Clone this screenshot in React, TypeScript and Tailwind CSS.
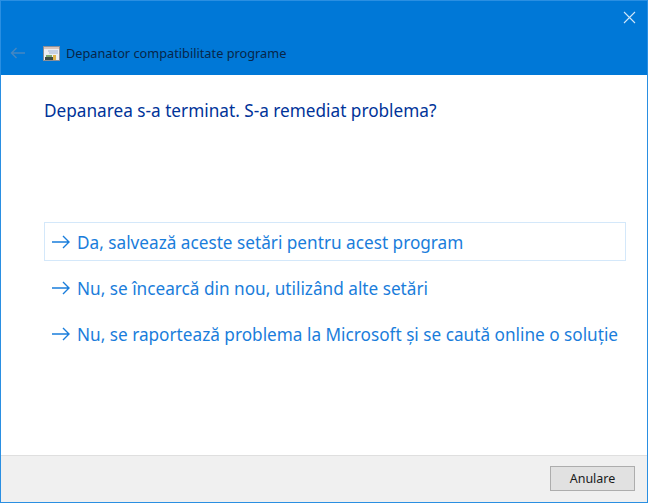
import React from 'react';

const font = { fontFamily: '"Noto Sans", "Open Sans", sans-serif' };

const ArrowIcon = () => (
  <svg width="20" height="14" viewBox="0 0 20 14" fill="none" stroke="#1a7ddb" strokeWidth="1.4" className="shrink-0">
    <path d="M1 7H18M12 1l6 6-6 6" />
  </svg>
);

const options = [
  'Da, salvează aceste setări pentru acest program',
  'Nu, se încearcă din nou, utilizând alte setări',
  'Nu, se raportează problema la Microsoft și se caută online o soluție',
];

export default function App() {
  return (
    <div className="w-[648px] h-[503px] flex flex-col border border-[#2a8fe2] bg-white overflow-hidden" style={font}>
      <div className="h-[74px] shrink-0 bg-[#0078d7] flex flex-col">
        <div className="h-[43px] flex justify-end items-start pr-[11px] pt-[10px]">
          <svg width="13" height="13" viewBox="0 0 13 13" stroke="#cfe6f8" strokeWidth="1.1">
            <path d="M1 1l11 11M12 1L1 12" />
          </svg>
        </div>
        <div className="flex items-center pl-[9px]">
          <svg width="15" height="12" viewBox="0 0 15 12" fill="none" stroke="#4587c2" strokeWidth="1.4" className="mr-[18px]">
            <path d="M15 6H1.5M6.5 1l-5 5 5 5" />
          </svg>
          <svg width="17" height="15" viewBox="0 0 17 15" className="mr-[6px]">
            <rect x="0.5" y="0.5" width="16" height="14" fill="#eceef3" stroke="#8a8f98" />
            <rect x="1" y="1" width="15" height="2" fill="#d8c4bc" />
            <path d="M5 5h10M6 7h9" stroke="#9fb2d2" strokeWidth="1" />
            <rect x="3" y="9" width="6" height="2" fill="#7fa86e" />
            <rect x="2" y="11" width="8" height="3" fill="#3d4a44" />
            <rect x="10" y="9" width="3" height="5" fill="#e0b44a" />
          </svg>
          <span className="text-[12.75px] leading-[18px] text-[#07264a]">Depanator compatibilitate programe</span>
        </div>
      </div>

      <div className="flex-1 flex flex-col pl-[43px] pr-[21px]">
        <h1 className="mt-[24px] text-[17.2px] leading-[24px] font-normal text-[#003399]">
          Depanarea s-a terminat. S-a remediat problema?
        </h1>
        <div className="mt-[99px] flex flex-col gap-[7px]">
          {options.map((text, i) => (
            <div
              key={text}
              className={`h-[39px] flex items-center pl-[6px] border ${i === 0 ? 'border-[#d4e8fa]' : 'border-transparent'}`}
            >
              <ArrowIcon />
              <span className="ml-[6px] pt-[3px] text-[17.2px] leading-[22px] whitespace-nowrap text-[#1a7ddb]">{text}</span>
            </div>
          ))}
        </div>
      </div>

      <div className="h-[47px] shrink-0 bg-[#f0f0f0] border-t border-[#dfdfdf] flex justify-end items-start pt-[10px] pr-[12px]">
        <button className="w-[85px] h-[25px] pt-[1px] bg-[#e1e1e1] border border-[#adadad] text-[12.5px] leading-[18px] text-[#1a1a1a]">
          Anulare
        </button>
      </div>
    </div>
  );
}
